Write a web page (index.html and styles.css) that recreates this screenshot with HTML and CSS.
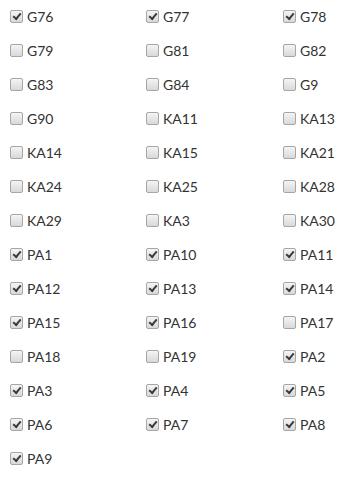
FILE: index.html
```html
<!DOCTYPE html>
<html lang="en">
<head>
    <meta charset="UTF-8">
    <title>Checklist</title>
    <link rel="stylesheet" href="styles.css">
</head>
<body>
    <div class="grid">
        <label class="item"><span class="box on"></span>G76</label>
        <label class="item"><span class="box on"></span>G77</label>
        <label class="item"><span class="box on"></span>G78</label>
        <label class="item"><span class="box"></span>G79</label>
        <label class="item"><span class="box"></span>G81</label>
        <label class="item"><span class="box"></span>G82</label>
        <label class="item"><span class="box"></span>G83</label>
        <label class="item"><span class="box"></span>G84</label>
        <label class="item"><span class="box"></span>G9</label>
        <label class="item"><span class="box"></span>G90</label>
        <label class="item"><span class="box"></span>KA11</label>
        <label class="item"><span class="box"></span>KA13</label>
        <label class="item"><span class="box"></span>KA14</label>
        <label class="item"><span class="box"></span>KA15</label>
        <label class="item"><span class="box"></span>KA21</label>
        <label class="item"><span class="box"></span>KA24</label>
        <label class="item"><span class="box"></span>KA25</label>
        <label class="item"><span class="box"></span>KA28</label>
        <label class="item"><span class="box"></span>KA29</label>
        <label class="item"><span class="box"></span>KA3</label>
        <label class="item"><span class="box"></span>KA30</label>
        <label class="item"><span class="box on"></span>PA1</label>
        <label class="item"><span class="box on"></span>PA10</label>
        <label class="item"><span class="box on"></span>PA11</label>
        <label class="item"><span class="box on"></span>PA12</label>
        <label class="item"><span class="box on"></span>PA13</label>
        <label class="item"><span class="box on"></span>PA14</label>
        <label class="item"><span class="box on"></span>PA15</label>
        <label class="item"><span class="box on"></span>PA16</label>
        <label class="item"><span class="box"></span>PA17</label>
        <label class="item"><span class="box"></span>PA18</label>
        <label class="item"><span class="box"></span>PA19</label>
        <label class="item"><span class="box on"></span>PA2</label>
        <label class="item"><span class="box on"></span>PA3</label>
        <label class="item"><span class="box on"></span>PA4</label>
        <label class="item"><span class="box on"></span>PA5</label>
        <label class="item"><span class="box on"></span>PA6</label>
        <label class="item"><span class="box on"></span>PA7</label>
        <label class="item"><span class="box on"></span>PA8</label>
        <label class="item"><span class="box on"></span>PA9</label>
    </div>
</body>
</html>
```

FILE: styles.css
```css
* {
    box-sizing: border-box;
}
body {
    margin: 0;
    background: #ffffff;
    font-family: Lato, 'Liberation Sans', sans-serif;
    font-size: 14px;
    color: #333333;
}

/* three columns */
.grid {
    display: grid;
    grid-template-columns: 136px 137px 1fr;
    grid-auto-rows: 34px;
    padding: 0 0 0 10px;
}

.item {
    display: flex;
    align-items: center;
    gap: 4px;
    height: 32px;
    white-space: nowrap;
}

/* checkbox look */
.box {
    width: 13px;
    height: 13px;
    border: 1px solid #a6a6a6;
    border-radius: 2px;
    background: linear-gradient(to bottom, #f4f4f4, #d9d9d9);
    display: flex;
    align-items: center;
    justify-content: center;
    flex: none;
}
.box.on::before {
    content: "";
    width: 6px;
    height: 3px;
    border-left: 2.5px solid #3a3a3a;
    border-bottom: 2.5px solid #3a3a3a;
    transform: rotate(-50deg);
    margin-top: -2px;
}
```
